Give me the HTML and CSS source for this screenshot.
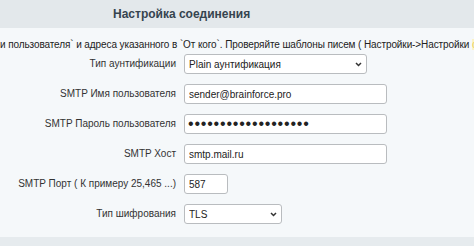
FILE: index.html
```html
<!DOCTYPE html>
<html lang="ru">
<head>
    <meta charset="UTF-8">
    <title>Настройка соединения</title>
    <link rel="stylesheet" href="styles.css">
</head>
<body>
    <div class="panel">
        <div class="panel-head">Настройка соединения</div>

        <div class="note">и пользователя` и адреса указанного в `От кого`. Проверяйте шаблоны писем ( Настройки-&gt;Настройки <span class="mark">с</span></div>

        <form class="fields">
            <label for="auth">Тип аунтификации</label>
            <div class="pick sel-auth">
                <select id="auth" class="ctl">
                    <option>Plain аунтификация</option>
                </select>
                <svg class="chev" width="7" height="5" viewBox="0 0 7 5"><path d="M1 1l2.5 2.5L6 1" fill="none" stroke="#333" stroke-width="1.5"/></svg>
            </div>

            <label for="user">SMTP Имя пользователя</label>
            <div><input type="text" id="user" class="ctl txt" value="sender@brainforce.pro"></div>

            <label for="pass">SMTP Пароль пользователя</label>
            <div><input type="password" id="pass" class="ctl txt pass" value="qwertyuiopasdfghjkl"></div>

            <label for="host">SMTP Хост</label>
            <div><input type="text" id="host" class="ctl txt" value="smtp.mail.ru"></div>

            <label for="port">SMTP Порт ( К примеру 25,465 ...)</label>
            <div><input type="text" id="port" class="ctl port" value="587"></div>

            <label for="crypt">Тип шифрования</label>
            <div class="pick sel-crypt">
                <select id="crypt" class="ctl">
                    <option>TLS</option>
                </select>
                <svg class="chev" width="7" height="5" viewBox="0 0 7 5"><path d="M1 1l2.5 2.5L6 1" fill="none" stroke="#333" stroke-width="1.5"/></svg>
            </div>
        </form>

        <div class="panel-foot"></div>
    </div>
</body>
</html>
```

FILE: styles.css
```css
*{
    box-sizing: border-box;
}
body{
    margin: 0;
    background-color: #f5f8fa;
    font-family: "Liberation Sans", Arial, sans-serif;
    font-size: 10px;
    color: #333;
    overflow: hidden;
}
.panel{
    width: 474px;
    height: 246px;
    background-color: #f5f8fa;
}
.panel-head{
    height: 28px;
    line-height: 28px;
    padding-left: 113px;
    background-color: #e3e8eb;
    color: #36444f;
    font-weight: bold;
    font-size: 12px;
}
.note{
    overflow: hidden;
    white-space: nowrap;
    height: 26px;
    padding-top: 6px;
    line-height: 22px;
    color: #222;
    font-size: 10px;
    letter-spacing: -0.1px;
}
.note .mark{
    color: #e8d060;
    background-color: #fbf3c6;
}
.fields{
    display: grid;
    grid-template-columns: 176px 1fr;
    column-gap: 8px;
    row-gap: 10px;
    margin: 0;
}
.fields label{
    text-align: right;
    line-height: 20px;
}
.ctl{
    width: 100%;
    height: 20px;
    margin: 0;
    border: 1px solid #b9bcbf;
    border-radius: 3px;
    background-color: #fff;
    font-family: "Liberation Sans", Arial, sans-serif;
    font-size: 10px;
    color: #222;
    padding: 0 4px;
    display: block;
    appearance: none;
    outline: none;
}
.txt{
    width: 203px;
}
.pass{
    font-size: 16px;
    letter-spacing: 0.8px;
    padding-left: 3px;
}
.port{
    width: 44px;
}
.pick{
    position: relative;
}
.sel-auth{
    width: 183px;
}
.sel-crypt{
    width: 98px;
}
.chev{
    position: absolute;
    right: 5px;
    top: 8px;
    pointer-events: none;
}
.panel-foot{
    margin-top: 13px;
    height: 12px;
    background-color: #e6ebee;
}
```
